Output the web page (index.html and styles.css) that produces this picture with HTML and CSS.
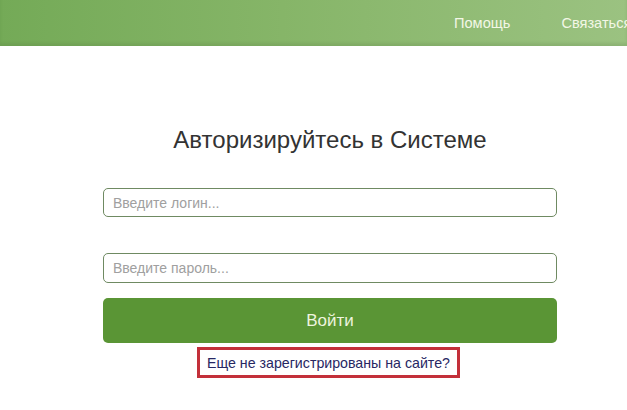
FILE: index.html
```html
<!DOCTYPE html>
<html lang="ru">
<head>
<meta charset="utf-8">
<link rel="stylesheet" href="styles.css">
</head>
<body>
<header class="topbar">
  <nav class="nav">
    <a class="nav-link" href="#">Помощь</a>
    <a class="nav-link" href="#">Связаться</a>
  </nav>
</header>
<main class="auth">
  <h1 class="auth-title">Авторизируйтесь в Системе</h1>
  <input class="field field-login" type="text" placeholder="Введите логин...">
  <input class="field field-pass" type="password" placeholder="Введите пароль...">
  <button class="btn-login">Войти</button>
  <div class="reg-wrap">
    <a class="reg-link" href="#">Еще не зарегистрированы на сайте?</a>
  </div>
</main>
</body>
</html>
```
FILE: styles.css
```css
html, body {
  margin: 0;
  padding: 0;
  background: #ffffff;
  font-family: "Liberation Sans", Arial, sans-serif;
  overflow: hidden;
}
.topbar {
  height: 46px;
  background: linear-gradient(90deg, #74aa57 0%, #86b568 45%, #9bc281 100%);
  box-shadow: inset 0 -3px 3px rgba(80, 110, 60, 0.18);
  display: flex;
  overflow: hidden;
}
.nav {
  display: flex;
  align-items: center;
  gap: 51px;
  padding-left: 454px;
  flex-shrink: 0;
}
.nav-link {
  color: #f3f7e6;
  font-size: 14.6px;
  text-decoration: none;
  white-space: nowrap;
}
.auth {
  margin-left: 103px;
  width: 454px;
  display: flex;
  flex-direction: column;
}
.auth-title {
  margin: 80px 0 0 0;
  font-size: 24px;
  font-weight: normal;
  color: #333333;
  text-align: center;
  line-height: 28px;
}
.field {
  box-sizing: border-box;
  height: 29px;
  border: 1px solid #6f8a62;
  border-radius: 5px;
  padding: 0 9px;
  font-family: "Liberation Sans", Arial, sans-serif;
  font-size: 14px;
  color: #333;
  outline: none;
}
.field::placeholder {
  color: #a0a0a0;
}
.field-login {
  margin-top: 34px;
}
.field-pass {
  margin-top: 36px;
  height: 30px;
}
.btn-login {
  margin-top: 15px;
  height: 45px;
  border: none;
  border-radius: 5px;
  background: #5a9535;
  color: #eef4df;
  font-family: "Liberation Sans", Arial, sans-serif;
  font-size: 17px;
}
.reg-wrap {
  display: flex;
  justify-content: center;
  margin-top: 4px;
}
.reg-link {
  box-sizing: border-box;
  width: 263px;
  height: 31px;
  border: 3px solid #c3303a;
  color: #272763;
  font-size: 14.2px;
  text-decoration: none;
  display: flex;
  align-items: center;
  justify-content: center;
  margin-left: -3px;
}
```
